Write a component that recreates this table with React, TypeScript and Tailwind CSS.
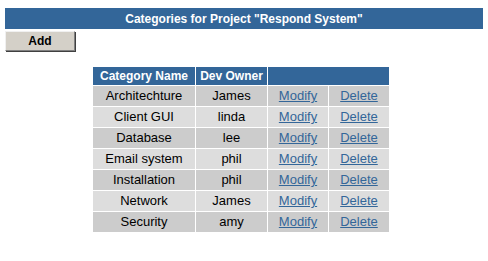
const rows = [
  { name: 'Architechture', owner: 'James' },
  { name: 'Client GUI', owner: 'linda' },
  { name: 'Database', owner: 'lee' },
  { name: 'Email system', owner: 'phil' },
  { name: 'Installation', owner: 'phil' },
  { name: 'Network', owner: 'James' },
  { name: 'Security', owner: 'amy' },
]

export default function App() {
  return (
    <div className="bg-white min-h-screen px-[5px] pt-[8px] font-['Liberation_Sans',Arial,sans-serif] text-[13px] text-black">
      {/* Title bar */}
      <div className="bg-[#336699] h-[21px] flex items-center justify-center text-white font-bold text-[12px]">
        Categories for Project "Respond System"
      </div>

      <button className="block mt-[2px] w-[70px] h-[20px] bg-[#d4d0c8] border border-t-[#f0f0f0] border-l-[#f0f0f0] border-r-[#808080] border-b-[#808080] shadow-[1px_1px_0_#404040] text-[12px] font-bold leading-none">
        Add
      </button>

      <div className="flex justify-center mt-[15px] pr-[6px]">
        <table className="border-separate border-spacing-[1px] w-[298px]">
          <thead>
            <tr className="bg-[#336699] text-white text-[12px] h-[17px]">
              <th className="w-[102px] p-0 font-bold">Category Name</th>
              <th className="w-[71px] p-0 font-bold">Dev Owner</th>
              <th colSpan={2} className="p-0"></th>
            </tr>
          </thead>
          <tbody>
            {rows.map((r, i) => (
              <tr key={r.name} className={`h-[20px] text-center ${i % 2 === 0 ? 'bg-[#cccccc]' : 'bg-[#dddddd]'}`}>
                <td className="p-0">{r.name}</td>
                <td className="p-0">{r.owner}</td>
                <td className="p-0 w-[60px]">
                  <a href="#" className="text-[#336699] underline">Modify</a>
                </td>
                <td className="p-0 w-[60px]">
                  <a href="#" className="text-[#336699] underline">Delete</a>
                </td>
              </tr>
            ))}
          </tbody>
        </table>
      </div>
    </div>
  )
}
